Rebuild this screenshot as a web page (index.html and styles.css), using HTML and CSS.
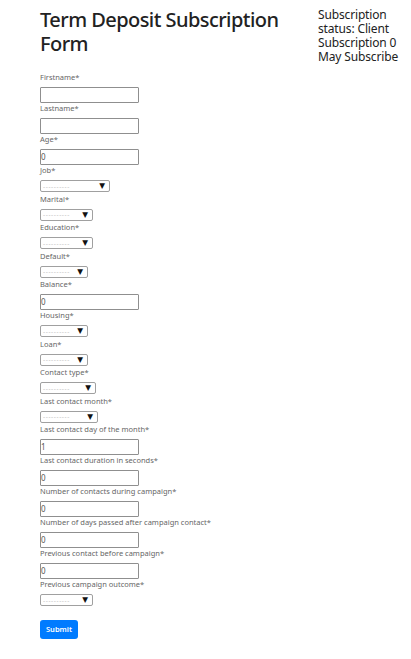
FILE: index.html
```html
<!DOCTYPE html>
<html>
<head>
<meta charset="utf-8">
<title>Term Deposit Subscription Form</title>
<link rel="stylesheet" href="styles.css">
</head>
<body>
<div class="page">
  <main class="form-col">
    <h1 class="title">Term Deposit Subscription Form</h1>
    <form class="form">
      <div class="field"><label class="lbl">Firstname*</label><div class="input"></div></div>
      <div class="field"><label class="lbl">Lastname*</label><div class="input"></div></div>
      <div class="field"><label class="lbl">Age*</label><div class="input">0</div></div>
      <div class="field"><label class="lbl">Job*</label><div class="select w70"><span class="ph">----------</span><span class="arrow">▼</span></div></div>
      <div class="field"><label class="lbl">Marital*</label><div class="select w53"><span class="ph">----------</span><span class="arrow">▼</span></div></div>
      <div class="field"><label class="lbl">Education*</label><div class="select w53"><span class="ph">----------</span><span class="arrow">▼</span></div></div>
      <div class="field"><label class="lbl">Default*</label><div class="select w48"><span class="ph">----------</span><span class="arrow">▼</span></div></div>
      <div class="field"><label class="lbl">Balance*</label><div class="input">0</div></div>
      <div class="field"><label class="lbl">Housing*</label><div class="select w48"><span class="ph">----------</span><span class="arrow">▼</span></div></div>
      <div class="field"><label class="lbl">Loan*</label><div class="select w48"><span class="ph">----------</span><span class="arrow">▼</span></div></div>
      <div class="field"><label class="lbl">Contact type*</label><div class="select w56"><span class="ph">----------</span><span class="arrow">▼</span></div></div>
      <div class="field"><label class="lbl">Last contact month*</label><div class="select w58"><span class="ph">----------</span><span class="arrow">▼</span></div></div>
      <div class="field"><label class="lbl">Last contact day of the month*</label><div class="input">1</div></div>
      <div class="field"><label class="lbl">Last contact duration in seconds*</label><div class="input">0</div></div>
      <div class="field"><label class="lbl">Number of contacts during campaign*</label><div class="input">0</div></div>
      <div class="field"><label class="lbl">Number of days passed after campaign contact*</label><div class="input">0</div></div>
      <div class="field"><label class="lbl">Previous contact before campaign*</label><div class="input">0</div></div>
      <div class="field"><label class="lbl">Previous campaign outcome*</label><div class="select w53"><span class="ph">----------</span><span class="arrow">▼</span></div></div>
      <button type="button" class="btn">Submit</button>
    </form>
  </main>
  <aside class="status">
    <div>Subscription status: Client</div>
    <div>Subscription 0</div>
    <div>May Subscribe</div>
  </aside>
</div>
</body>
</html>
```
FILE: styles.css
```css
html, body {
  margin: 0;
  padding: 0;
  background: #fff;
}
body {
  padding: 8px 0 0 0;
  font-family: "Noto Sans", "Open Sans", sans-serif;
  color: #212529;
}
.page {
  display: flex;
  align-items: flex-start;
  padding-left: 40px;
}
.form-col {
  width: 278px;
  flex: none;
}
.title {
  margin: 0;
  font-size: 20px;
  letter-spacing: -0.55px;
  line-height: 24px;
  font-weight: 500;
  color: #222;
}
.form {
  display: flex;
  flex-direction: column;
  align-items: flex-start;
  padding-top: 16px;
}
.field {
  display: flex;
  flex-direction: column;
  align-items: flex-start;
}
.lbl {
  font-size: 7.5px;
  line-height: 11px;
  margin-bottom: 4px;
  color: #666;
}
.input {
  box-sizing: border-box;
  width: 99px;
  height: 16px;
  border: 1px solid #8f8f8f;
  border-radius: 1px;
  font-size: 8px;
  line-height: 14px;
  padding-left: 0;
  color: #555;
}
.select {
  box-sizing: border-box;
  height: 12px;
  margin-bottom: 1.5px;
  border: 1px solid #a0a0a0;
  border-radius: 2px;
  display: flex;
  align-items: center;
  justify-content: space-between;
  padding: 0 4px 0 2px;
}
.w70 { width: 70px; }
.w58 { width: 58px; }
.w56 { width: 56px; }
.w53 { width: 53px; }
.w48 { width: 48px; }
.ph {
  font-size: 6.5px;
  letter-spacing: 0.6px;
  color: #c4c4c4;
  line-height: 10px;
  padding-top: 1px;
}
.arrow {
  font-family: "DejaVu Sans", sans-serif;
  font-size: 7.5px;
  line-height: 10px;
  color: #111;
}
.btn {
  margin-top: 12px;
  width: 38px;
  height: 19px;
  background: #007bff;
  border: none;
  border-radius: 3px;
  color: #fff;
  font-family: inherit;
  font-size: 7.5px;
  font-weight: 600;
  padding: 0;
}
.status {
  font-size: 12px;
  letter-spacing: -0.15px;
  line-height: 14px;
  color: #222;
  width: 86px;
}
```
